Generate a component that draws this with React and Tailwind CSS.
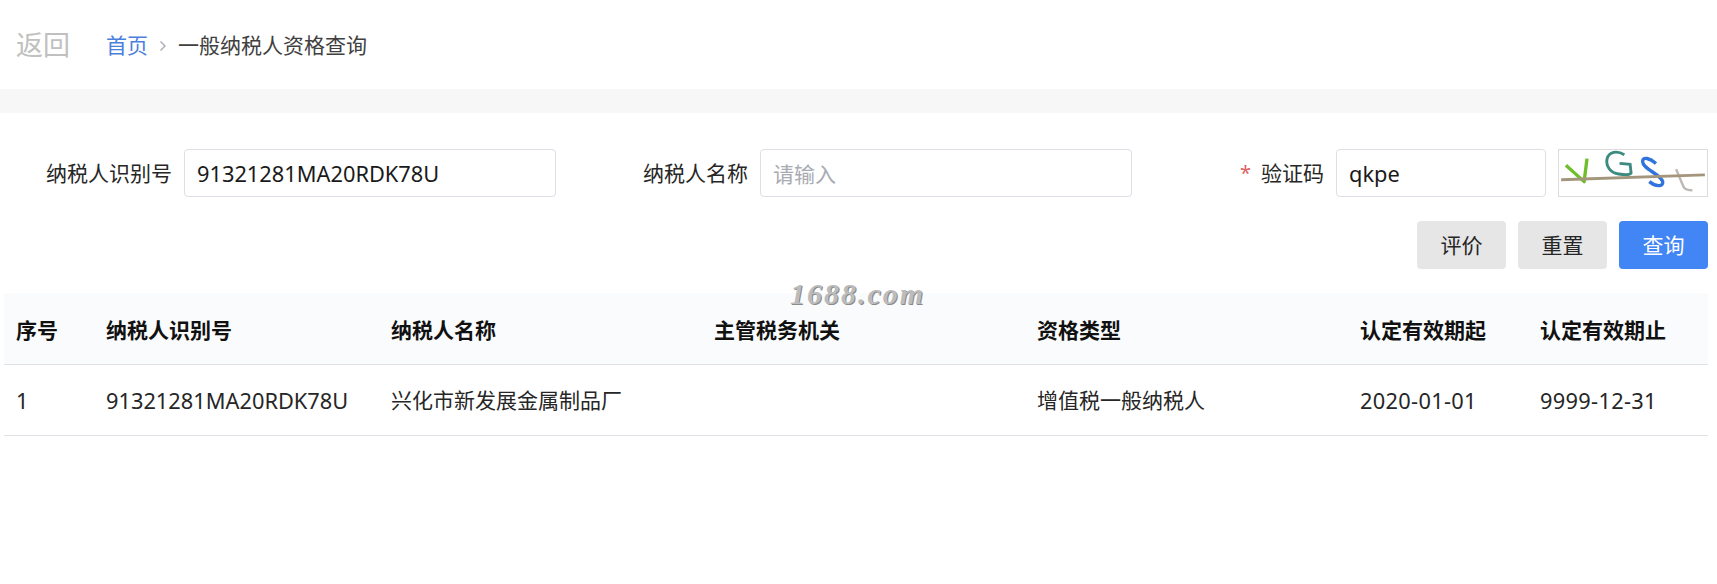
const font = { fontFamily: '"Noto Sans", "Noto Sans CJK SC", sans-serif' };

const columns = [
  ["序号", "w-[90px]"],
  ["纳税人识别号", "w-[285px]"],
  ["纳税人名称", "w-[323px]"],
  ["主管税务机关", "w-[323px]"],
  ["资格类型", "w-[323px]"],
  ["认定有效期起", "w-[180px]"],
  ["认定有效期止", "w-[180px]"],
];

function Captcha() {
  return (
    <svg viewBox="0 0 150 48" className="h-[48px] w-[150px] border border-[#dcdcdc] bg-white">
      <path d="M5 16 L24 33 L27 9" fill="none" stroke="#6fbf2a" strokeWidth="3.5" strokeLinejoin="round" />
      <path d="M66 5 C58 0 50 2 48 9 C46 17 52 24 60 25 C66 26 72 26 73 24 L72 15 L61 14" fill="none" stroke="#3c8a80" strokeWidth="3" />
      <path d="M99 14 C93 9 85 6 85 12 C85 20 104 25 106 33 C107 39 98 38 92 33" fill="none" stroke="#2f73dc" strokeWidth="3.5" />
      <path d="M120 20 L128 39 C130 42 134 42 137 42" fill="none" stroke="#bdb8b4" strokeWidth="2.5" />
      <path d="M0 31 L150 26" stroke="#a3967c" strokeWidth="3" />
    </svg>
  );
}

function Field({ label, required, children }) {
  return (
    <div className="flex items-center justify-end">
      {required && <span className="mr-[10px] text-[20px] text-[#e0605f]">*</span>}
      <label className="mr-3 translate-y-px text-[21px] text-[#262626] whitespace-nowrap">{label}</label>
      {children}
    </div>
  );
}

const inputClass = "h-[48px] rounded-[4px] border border-[#dcdfe6] bg-white px-3 text-[21.8px] text-[#1a1a1a] placeholder:text-[21px] placeholder:text-[#a8abb2] outline-none";

export default function App() {
  return (
    <div style={font} className="relative h-[584px] w-[1717px] overflow-hidden bg-white text-[#303133]">
      <header className="flex h-[89px] items-center pl-4 pt-[2px]">
        <span className="w-[90px] text-[27px] text-[#c0c0c0]">返回</span>
        <span className="text-[21px] text-[#4a7fdc]">首页</span>
        <svg viewBox="0 0 12 12" className="mx-[9px] h-[12px] w-[12px]" fill="none" stroke="#a8abb2" strokeWidth="1.4">
          <path d="M3.5 1.5 L8 6 L3.5 10.5" />
        </svg>
        <span className="text-[21px] text-[#404040]">一般纳税人资格查询</span>
      </header>
      <div className="h-[24px] bg-[#f7f7f8]" />
      <form className="grid grid-cols-[556px_576px_576px] pt-9">
        <Field label="纳税人识别号">
          <input readOnly value="91321281MA20RDK78U" className={`${inputClass} w-[372px]`} style={font} />
        </Field>
        <Field label="纳税人名称">
          <input readOnly placeholder="请输入" className={`${inputClass} w-[372px]`} style={font} />
        </Field>
        <Field label="验证码" required>
          <input readOnly value="qkpe" className={`${inputClass} mr-3 w-[210px]`} style={font} />
          <Captcha />
        </Field>
      </form>
      <div className="flex w-[1708px] justify-end gap-3 pt-6">
        <button className="h-[48px] w-[89px] rounded-[4px] bg-[#e6e6e6] pt-[2px] text-[21px] text-[#262626]">评价</button>
        <button className="h-[48px] w-[89px] rounded-[4px] bg-[#e6e6e6] pt-[2px] text-[21px] text-[#262626]">重置</button>
        <button className="h-[48px] w-[89px] rounded-[4px] bg-[#4285f4] pt-[2px] text-[21px] text-white">查询</button>
      </div>
      <table className="ml-1 mt-[24px] w-[1704px] table-fixed border-collapse text-left text-[21px]">
        <thead>
          <tr className="h-[71px] border-b border-[#dfe1e6] bg-[#fafbfc]">
            {columns.map(([name, w]) => (
              <th key={name} className={`${w} px-3 pt-[4px] font-bold text-[#111]`}>{name}</th>
            ))}
          </tr>
        </thead>
        <tbody>
          <tr className="h-[71px] border-b border-[#dfe1e6] text-[#262626]">
            <td className="px-3 pt-[3px] text-[21.8px]">1</td>
            <td className="px-3 pt-[3px] text-[21.8px]">91321281MA20RDK78U</td>
            <td className="px-3 pt-[3px]">兴化市新发展金属制品厂</td>
            <td className="px-3 pt-[3px]"></td>
            <td className="px-3 pt-[3px]">增值税一般纳税人</td>
            <td className="px-3 pt-[3px] text-[21.8px] tracking-[0.3px]">2020-01-01</td>
            <td className="px-3 pt-[3px] text-[21.8px] tracking-[0.3px]">9999-12-31</td>
          </tr>
        </tbody>
      </table>
      <div
        className="absolute left-[790px] top-[271px] text-[30px] font-bold italic tracking-[2px] text-[#bcbcbc] [text-shadow:1px_1px_0_#8a8a8a]"
        style={{ fontFamily: '"Liberation Serif", serif' }}
      >
        1688.com
      </div>
    </div>
  );
}
